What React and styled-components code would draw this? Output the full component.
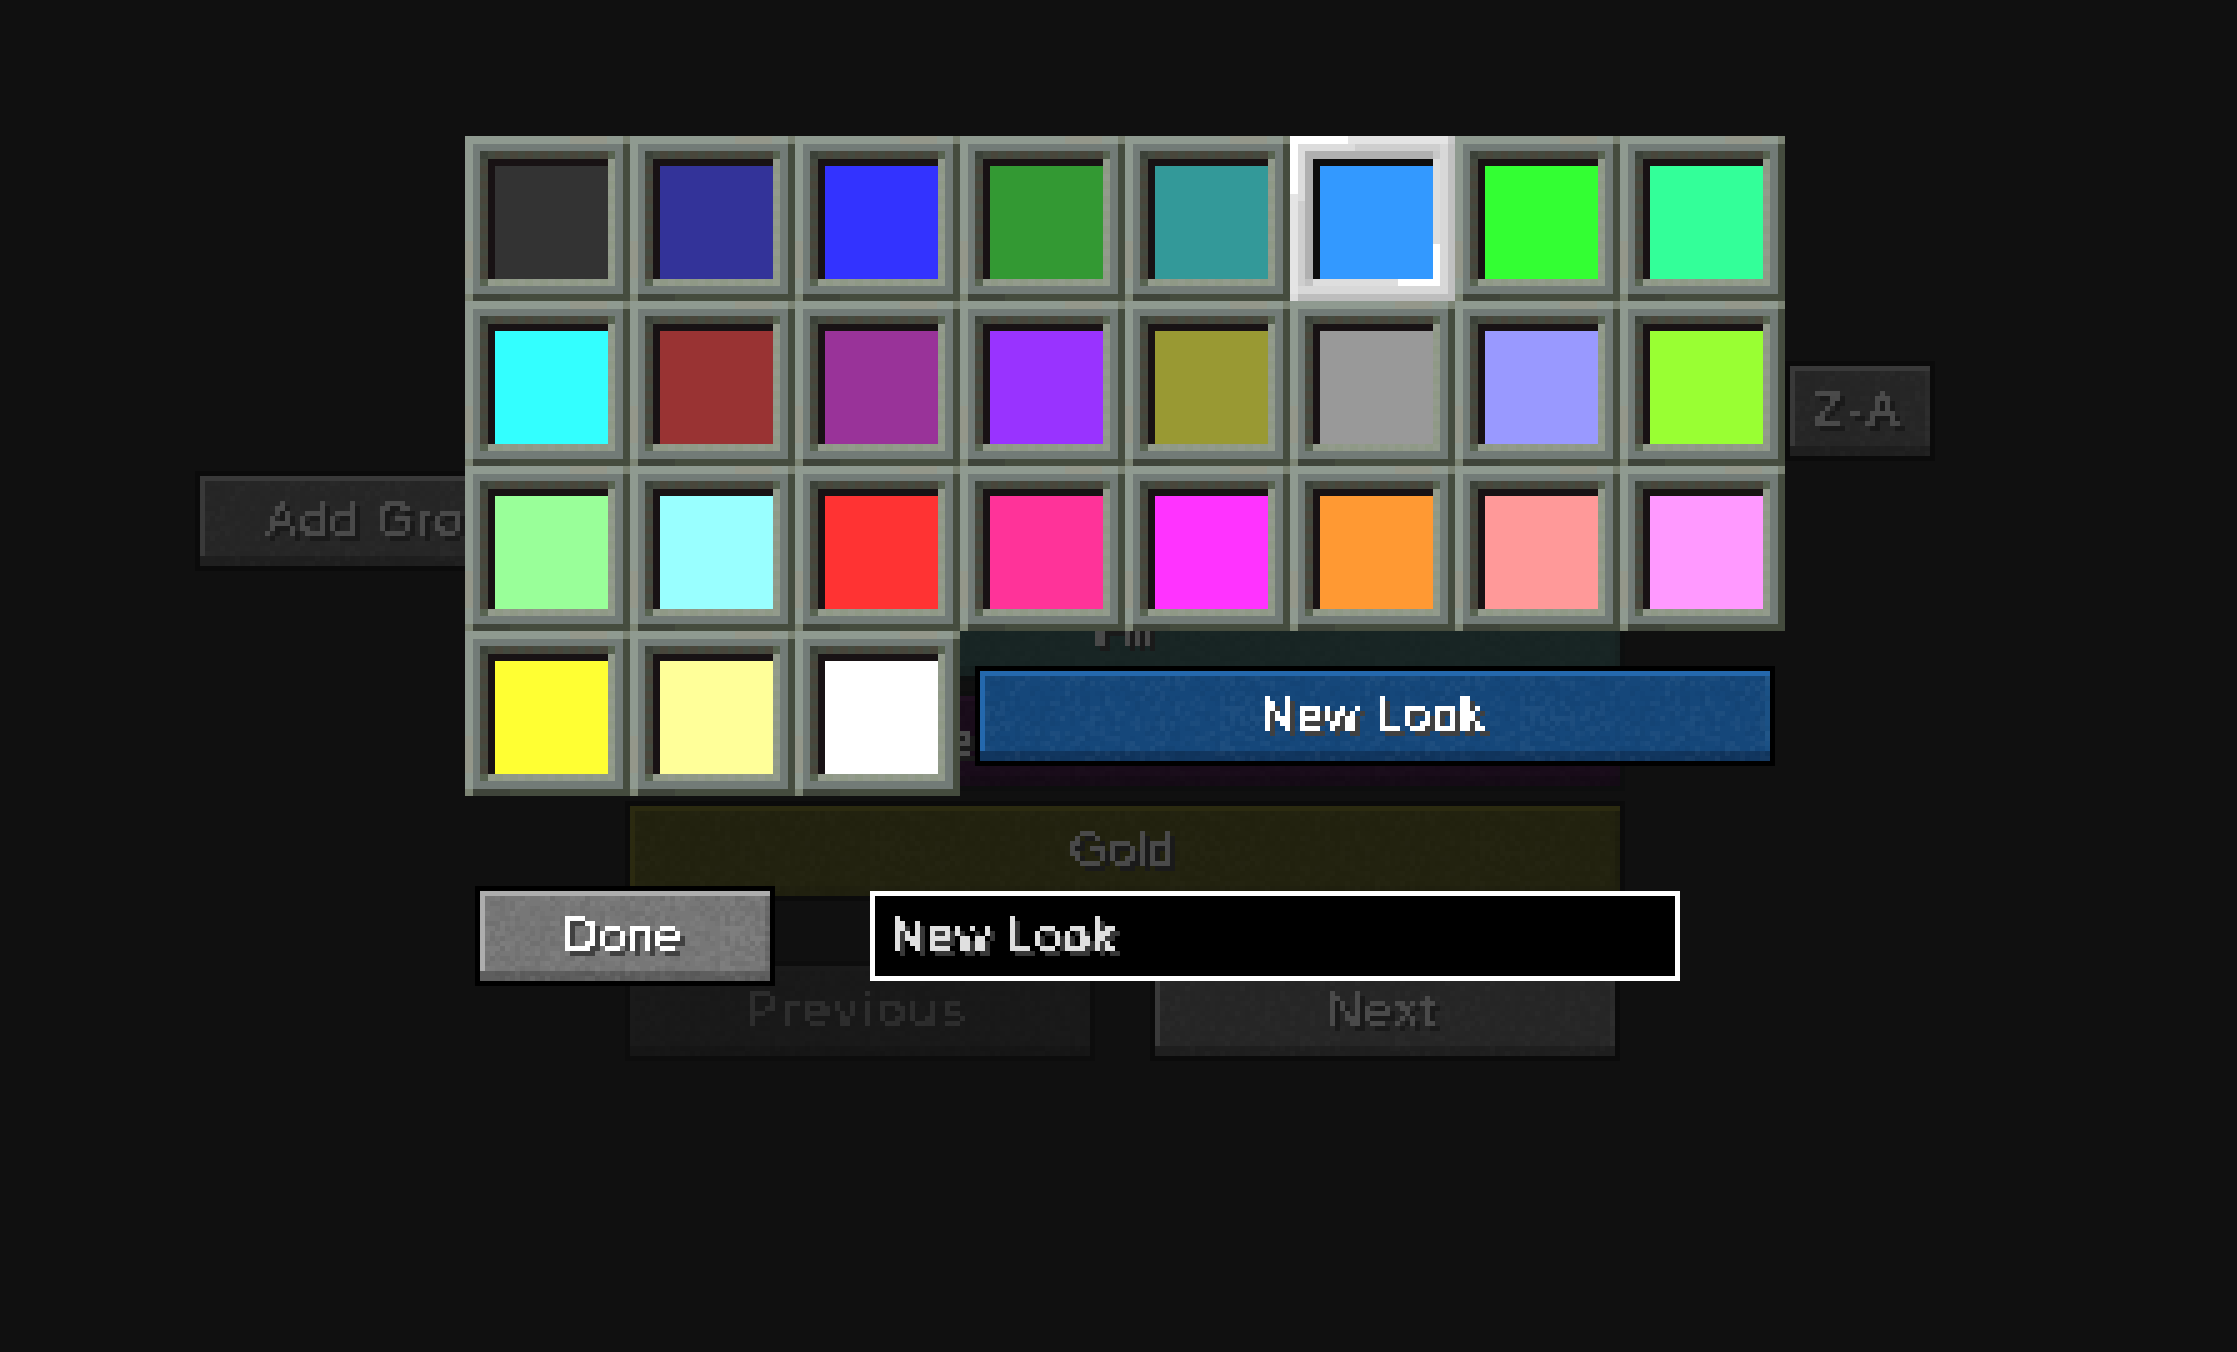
import React from "react";
import styled, { createGlobalStyle } from "styled-components";

const swatches = [
  "#333333", "#333399", "#3333ff", "#339933", "#339999", "#3399ff", "#33ff33", "#33ff99",
  "#33ffff", "#993333", "#993399", "#9933ff", "#999933", "#999999", "#9999ff", "#99ff33",
  "#99ff99", "#99ffff", "#ff3333", "#ff3399", "#ff33ff", "#ff9933", "#ff9999", "#ff99ff",
  "#ffff33", "#ffff99", "#ffffff",
];
const SELECTED = 5;

// one flat rectangle of a slot frame, as a background layer
const rect = (color, x, y, w, h) =>
  `linear-gradient(${color}, ${color}) ${x}px ${y}px / ${w}px ${h}px no-repeat`;
const stripes = (dir, a, b, x, y, w, h) =>
  `repeating-linear-gradient(${dir}, ${a} 0 7.5px, ${b} 7.5px 15px) ${x}px ${y}px / ${w}px ${h}px no-repeat`;

const slotFrame = [
  rect("#7b8373", 158, 0, 7, 8),
  rect("#7d8574", 0, 158, 8, 7),
  rect("#56624f", 143, 15, 7, 8),
  rect("#576350", 15, 143, 8, 7),
  stripes("90deg", "#939b8c", "#8f9986", 23, 143, 127, 7),
  stripes("180deg", "#939b8c", "#8f9986", 143, 23, 7, 120),
  rect("#181214", 23, 23, 120, 7),
  rect("#181214", 23, 23, 7, 120),
  rect("#3c4239", 15, 15, 8, 8),
  stripes("90deg", "#444a3f", "#49463b", 23, 15, 127, 8),
  stripes("180deg", "#444a3f", "#49463b", 15, 23, 8, 120),
  rect("#727b77", 8, 8, 150, 150),
  rect("#3f443a", 8, 158, 37, 7),
  rect("#454c3e", 8, 158, 157, 7),
  rect("#454c3e", 158, 8, 7, 157),
  rect("#94978a", 105, 0, 37, 8),
  rect("#94978a", 0, 105, 8, 37),
  rect("#8f9a90", 0, 0, 165, 165),
].join(", ");

const selectedFrame = [
  rect("#ffffff", 143, 108, 7, 42),
  rect("#ffffff", 108, 143, 42, 7),
  rect("#dedede", 143, 23, 7, 85),
  rect("#dedede", 23, 143, 85, 7),
  rect("#0e0e0e", 23, 23, 120, 7),
  rect("#0e0e0e", 23, 23, 7, 120),
  rect("#c8c8c8", 143, 15, 7, 8),
  rect("#c2c2c2", 15, 143, 8, 7),
  rect("#b0b0b0", 15, 15, 128, 8),
  rect("#b0b0b0", 15, 15, 8, 128),
  rect("#dcdcdc", 8, 8, 57, 7),
  rect("#dcdcdc", 8, 8, 7, 57),
  rect("#cecece", 8, 8, 142, 7),
  rect("#cecece", 8, 8, 7, 142),
  rect("#d8d8d8", 8, 8, 150, 150),
  rect("#c8c8c8", 158, 0, 7, 8),
  rect("#dcdcdc", 0, 158, 8, 7),
  rect("#bdbdbd", 8, 158, 157, 7),
  rect("#c0c0c0", 158, 0, 7, 165),
  rect("#ffffff", 0, 0, 58, 8),
  rect("#ffffff", 0, 0, 8, 58),
  rect("#e4e4e4", 0, 0, 165, 165),
].join(", ");

// stone texture tile for the buttons, 5px cells from a small seeded generator
const grainCells = [];
let seed = 1234;
for (let y = 0; y < 24; y++) {
  for (let x = 0; x < 60; x++) {
    seed = (seed * 1103515245 + 12345) & 0x7fffffff;
    const n = ((seed >> 12) & 255) / 255;
    if (n < 0.3 || n > 0.7) {
      grainCells.push({ x: x * 5, y: y * 5, light: n > 0.5, alpha: Math.abs(n - 0.5) * 0.16 });
    }
  }
}

const GlobalStyle = createGlobalStyle`
  html, body {
    margin: 0;
    padding: 0;
    background: #101010;
  }
`;

const Page = styled.div`
  position: relative;
  width: 2237px;
  height: 1352px;
  overflow: hidden;
  background: #101010;
  font-family: "Liberation Sans", Arial, sans-serif;
`;

const Defs = styled.svg`
  position: absolute;
  width: 0;
  height: 0;
`;

// the screen behind the picker, dimmed
const Backdrop = styled.div`
  display: flex;
  align-items: flex-start;
  padding-left: 195px;
`;

const LeftColumn = styled.div`
  width: 410px;
  margin-top: 471px;
  margin-right: 20px;
`;

const CenterColumn = styled.div`
  display: flex;
  flex-direction: column;
  gap: 10px;
  width: 1000px;
  padding-top: 581px;
`;

const RightColumn = styled.div`
  width: 150px;
  margin-top: 361px;
  margin-left: 160px;
`;

const Pager = styled.div`
  display: flex;
  justify-content: space-between;
  width: 995px;
  margin-top: 50px;
`;

const tones = {
  dim: { fill: "#262626", hi: "#393939", band: "#1f1f1f", right: "#2b2b2b", edge: "#0b0b0b", grain: 0.2 },
  off: { fill: "#191919", hi: "#1a1a1a", band: "#161616", right: "#191919", edge: "#0d0d0d", grain: 0.1 },
  teal: { fill: "#182524", hi: "#1c2a28", band: "#15201f", right: "#172221", edge: "#0d0f0f", grain: 0.1 },
  purple: { fill: "#190c1a", hi: "#1f0f20", band: "#150b16", right: "#180c19", edge: "#0d0e0e", grain: 0.1 },
  gold: { fill: "#22220f", hi: "#2b2a10", band: "#20200f", right: "#1e1e0d", edge: "#0b0b0b", grain: 0.15 },
  blue: { fill: "#15477a", hi: "#2468ad", band: "#11365f", right: "#1b5185", edge: "#000000", grain: 0.5 },
  grey: { fill: "#777777", hi: "#adadad", band: "#5e5e5e", right: "#6a6a6a", edge: "#000000", grain: 0.7 },
};

const ButtonBox = styled.div`
  position: relative;
  display: flex;
  align-items: center;
  justify-content: ${(p) => p.$align || "center"};
  box-sizing: border-box;
  width: ${(p) => p.$width || "100%"};
  height: 100px;
  padding-left: ${(p) => p.$inset || 0}px;
  overflow: hidden;
  border: 5px solid ${(p) => tones[p.$tone].edge};
  background-color: ${(p) => tones[p.$tone].fill};
  box-shadow:
    inset 0 -10px 0 ${(p) => tones[p.$tone].band},
    inset 5px 5px 0 ${(p) => tones[p.$tone].hi},
    inset -5px 0 0 ${(p) => tones[p.$tone].right};
`;

const Grain = styled.svg`
  position: absolute;
  top: 5px;
  left: 5px;
  width: calc(100% - 5px);
  height: calc(100% - 5px);
  opacity: ${(p) => tones[p.$tone].grain};
`;

const Label = styled.span`
  position: relative;
  display: block;
  box-sizing: border-box;
  width: ${(p) => p.$width}px;
  padding: 5px 5px 7px 0;
  color: ${(p) => p.$ink || "#ffffff"};
  font-size: 48px;
  line-height: 1;
  letter-spacing: ${(p) => p.$spacing || 0}px;
  text-align: ${(p) => (p.$left ? "left" : "center")};
  white-space: nowrap;
  -webkit-text-stroke: 1px currentColor;
  filter: url(#${(p) => p.$shadow || "mc"});
`;

// the picker and the rename form, on top of the dimmed screen
const Overlay = styled.div`
  position: absolute;
  inset: 0;
  padding: 136px 0 0 465px;
`;

const SlotGrid = styled.div`
  display: grid;
  grid-template-columns: repeat(8, 165px);
  grid-auto-rows: 165px;
`;

const Slot = styled.div`
  display: flex;
  box-sizing: border-box;
  padding: 30px 22px 22px 30px;
  background: ${(p) => (p.$selected ? selectedFrame : slotFrame)};
`;

const Swatch = styled.div`
  flex: 1;
  background: ${(p) => p.$color};
`;

const LookCell = styled.div`
  grid-column: 4 / 9;
  padding: 35px 0 0 15px;
`;

const EditRow = styled.div`
  display: flex;
  margin: 90px 0 0 10px;
`;

const NameField = styled.div`
  display: flex;
  align-items: center;
  box-sizing: border-box;
  width: 810px;
  height: 90px;
  margin: 5px 0 0 95px;
  padding-left: 15px;
  border: 5px solid #ffffff;
  background: #000000;
`;

const NameInput = styled.input`
  flex: 1;
  box-sizing: border-box;
  height: 60px;
  padding: 0 0 2px 1px;
  border: none;
  outline: none;
  background: transparent;
  color: #e0e0e0;
  font-family: inherit;
  font-size: 48px;
  letter-spacing: 1.5px;
  -webkit-text-stroke: 1px currentColor;
  filter: url(#mc);
`;

function PixelFilter({ id, shade }) {
  return (
    <filter id={id} x="0" y="0" width="100%" height="100%" colorInterpolationFilters="sRGB">
      <feFlood x="2" y="2" width="1" height="1" floodColor="#000" />
      <feComposite width="5" height="5" />
      <feTile result="grid" />
      <feComposite in="SourceGraphic" in2="grid" operator="in" />
      <feMorphology operator="dilate" radius="2" />
      <feComponentTransfer result="blocks">
        <feFuncA type="discrete" tableValues="0 1" />
      </feComponentTransfer>
      <feColorMatrix
        in="blocks"
        type="matrix"
        values={`${shade} 0 0 0 0  0 ${shade} 0 0 0  0 0 ${shade} 0 0  0 0 0 1 0`}
      />
      <feOffset dx="5" dy="5" result="shadow" />
      <feMerge>
        <feMergeNode in="shadow" />
        <feMergeNode in="blocks" />
      </feMerge>
    </filter>
  );
}

function Button({ tone, width, align, inset, children }) {
  return (
    <ButtonBox $tone={tone} $width={width} $align={align} $inset={inset}>
      <Grain $tone={tone} aria-hidden="true">
        <rect width="100%" height="100%" fill="url(#grain)" />
      </Grain>
      {children}
    </ButtonBox>
  );
}

const DIM_INK = "#4a4a4a";

export default function App() {
  return (
    <Page>
      <GlobalStyle />
      <Defs aria-hidden="true">
        <defs>
          <pattern id="grain" width="300" height="120" patternUnits="userSpaceOnUse">
            {grainCells.map((c) => (
              <rect
                key={`${c.x}-${c.y}`}
                x={c.x}
                y={c.y}
                width="5"
                height="5"
                fill={c.light ? "#fff" : "#000"}
                fillOpacity={c.alpha}
              />
            ))}
          </pattern>
        </defs>
        <PixelFilter id="mc" shade="0.25" />
        <PixelFilter id="mcDim" shade="0.35" />
        <PixelFilter id="mcOff" shade="0.55" />
      </Defs>

      <Backdrop>
        <LeftColumn>
          <Button tone="dim" align="flex-start" inset={65}>
            <Label $ink={DIM_INK} $shadow="mcDim" $spacing={3} $width={300} $left>Add Group</Label>
          </Button>
        </LeftColumn>
        <CenterColumn>
          <Button tone="teal">
            <Label $ink={DIM_INK} $shadow="mcDim" $spacing={-1} $width={110}>Fill</Label>
          </Button>
          <Button tone="purple" align="flex-start" inset={205}>
            <Label $ink={DIM_INK} $shadow="mcDim" $width={170} $left>Purple</Label>
          </Button>
          <Button tone="gold">
            <Label $ink={DIM_INK} $shadow="mcDim" $spacing={1} $width={150}>Gold</Label>
          </Button>
          <Pager>
            <Button tone="off" width="470px">
              <Label $ink="#2d2d2d" $shadow="mcOff" $spacing={4.5} $width={260}>Previous</Label>
            </Button>
            <Button tone="dim" width="470px">
              <Label $ink={DIM_INK} $shadow="mcDim" $spacing={3} $width={150}>Next</Label>
            </Button>
          </Pager>
        </CenterColumn>
        <RightColumn>
          <Button tone="dim">
            <Label $ink={DIM_INK} $shadow="mcDim" $spacing={4} $width={120}>Z-A</Label>
          </Button>
        </RightColumn>
      </Backdrop>

      <Overlay>
        <SlotGrid>
          {swatches.map((color, i) => (
            <Slot key={color} $selected={i === SELECTED}>
              <Swatch $color={color} />
            </Slot>
          ))}
          <LookCell>
            <Button tone="blue" width="800px">
              <Label $spacing={1.5} $width={260}>New Look</Label>
            </Button>
          </LookCell>
        </SlotGrid>
        <EditRow>
          <Button tone="grey" width="300px">
            <Label $spacing={1} $width={150}>Done</Label>
          </Button>
          <NameField>
            <NameInput readOnly defaultValue="New Look" />
          </NameField>
        </EditRow>
      </Overlay>
    </Page>
  );
}
